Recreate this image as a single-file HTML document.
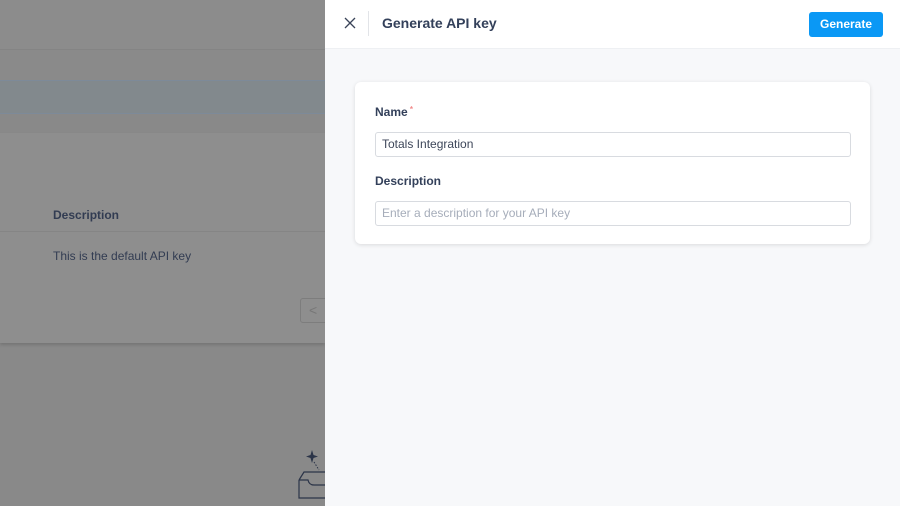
<!DOCTYPE html>
<html><head><style>
*{margin:0;padding:0;box-sizing:border-box}
body{width:900px;height:506px;position:relative;overflow:hidden;font-family:"Liberation Sans",sans-serif;background:#898989}
.abs{position:absolute}
</style></head><body>
<div class="abs" style="left:0;top:0;width:325px;height:49px;background:#8c8c8c"></div>
<div class="abs" style="left:0;top:49px;width:325px;height:1px;background:#848484"></div>
<div class="abs" style="left:0;top:50px;width:325px;height:31px;background:#8a8a8a"></div>
<div class="abs" style="left:0;top:80px;width:325px;height:34px;background:#82898d;border-top:1px solid #7d8a99;border-bottom:1px solid #7d8a99"></div>
<div class="abs" style="left:0;top:114px;width:325px;height:19px;background:#898989"></div>
<div class="abs" style="left:0;top:133px;width:325px;height:210px;background:#8e8e8e;box-shadow:0 2px 3px rgba(0,0,0,.15)"></div>
<div class="abs" style="left:0;top:231px;width:325px;height:1px;background:#858585"></div>
<div class="abs" style="left:53px;top:208px;font-size:12px;font-weight:bold;color:#323c52">Description</div>
<div class="abs" style="left:53px;top:249px;font-size:12px;color:#323c52">This is the default API key</div>
<div class="abs" style="left:300px;top:298px;width:30px;height:25px;border:1px solid #7d7d7d;border-radius:3px;color:#777;font-size:14px;padding-left:8px;line-height:22px">&lt;</div>
<svg class="abs" style="left:296px;top:448px" width="30" height="52"><path d="M16 2 L17.5 7 L22 8.5 L17.5 10 L16 15 L14.5 10 L10 8.5 L14.5 7Z" fill="#2b3448"/><path d="M18 14 L23 22" stroke="#2b3448" stroke-dasharray="1.5 1.5"/><path d="M3 32 L8 24 H30 M3 32 V50 H30 M3 32 H12 Q13 37 18 37 H30" fill="none" stroke="#2b3448" stroke-width="1.2"/></svg>

<div class="abs" style="left:325px;top:0;width:575px;height:506px;background:#f7f8fa"></div>
<div class="abs" style="left:325px;top:0;width:575px;height:49px;background:#fff;border-bottom:1px solid #eef0f3"></div>
<svg class="abs" style="left:343px;top:16px" width="14" height="14"><path d="M2 2L12 12M12 2L2 12" stroke="#3a4459" stroke-width="1.3"/></svg>
<div class="abs" style="left:368px;top:11px;width:1px;height:25px;background:#e2e4e8"></div>
<div class="abs" style="left:382px;top:15px;font-size:14px;font-weight:bold;color:#33405a">Generate API key</div>
<div class="abs" style="left:809px;top:12px;width:74px;height:25px;background:#0a98f5;border-radius:3px;color:#fff;font-size:12px;font-weight:bold;text-align:center;line-height:25px">Generate</div>
<div class="abs" style="left:355px;top:82px;width:515px;height:162px;background:#fff;border-radius:6px;box-shadow:0 1px 4px rgba(0,0,0,.12)"></div>
<div class="abs" style="left:375px;top:105px;font-size:12px;font-weight:bold;color:#33405a">Name<span style="color:#f28b8b;font-size:8px;vertical-align:top"> *</span></div>
<div class="abs" style="left:375px;top:132px;width:476px;height:25px;border:1px solid #d8dbe0;border-radius:3px;font-size:12px;color:#3d4659;padding-left:6px;line-height:23px">Totals Integration</div>
<div class="abs" style="left:375px;top:174px;font-size:12px;font-weight:bold;color:#33405a">Description</div>
<div class="abs" style="left:375px;top:201px;width:476px;height:25px;border:1px solid #d8dbe0;border-radius:3px;font-size:12px;color:#a6adba;padding-left:6px;line-height:23px">Enter a description for your API key</div>
</body></html>
